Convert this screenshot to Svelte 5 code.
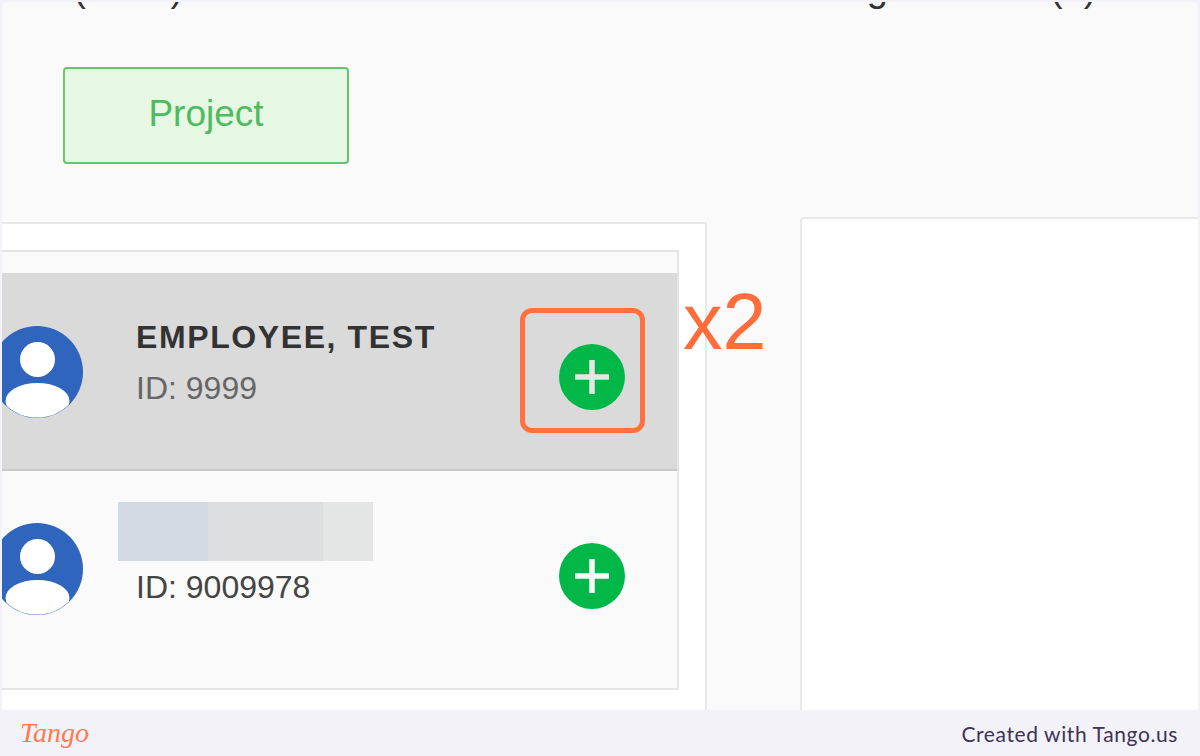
<script>
  const employees = [
    { name: "EMPLOYEE, TEST", id: "9999", selected: true },
    { name: "", id: "9009978", selected: false }
  ];
</script>

<div class="frame">
  <div class="shot">
    <div class="left-col">
      <h2 class="title left-title">AE (2872)</h2>
      <button class="project">Project</button>
      <div class="panel">
        <div class="list">
          {#each employees as emp}
            <div class="row" class:selected={emp.selected}>
              <svg class="avatar" width="94" height="94" viewBox="0 0 94 94">
                <defs>
                  <clipPath id="disc"><circle cx="47" cy="47" r="45.6" /></clipPath>
                </defs>
                <circle cx="47" cy="47" r="46" fill="#2f65bd" />
                <circle cx="47.5" cy="34.5" r="17.5" fill="#fff" />
                <ellipse cx="47.5" cy="76" rx="32" ry="18" fill="#fff" clip-path="url(#disc)" />
              </svg>
              <div class="info">
                {#if emp.selected}
                  <div class="name">{emp.name}</div>
                {:else}
                  <div class="blur">
                    <span class="b1"></span>
                    <span class="b2"></span>
                    <span class="b3"></span>
                  </div>
                {/if}
                <div class="id">ID: {emp.id}</div>
              </div>
              <svg class="add" width="66" height="66" viewBox="0 0 66 66">
                <circle cx="33" cy="33" r="33" fill="#00b748" />
                <path d="M16 33H50M33 16V50" stroke={emp.selected ? "#e6e6e6" : "#fafafa"} stroke-width="5.5" />
              </svg>
            </div>
          {/each}
        </div>
      </div>
    </div>
    <div class="right-col">
      <h2 class="title right-title">Assigned Staff (0)</h2>
      <div class="right-panel"></div>
    </div>

    <div class="highlight"></div>
    <div class="times">x2</div>
  </div>

  <div class="footer">
    <span class="logo">Tango</span>
    <span class="credit">Created with Tango.us</span>
  </div>
</div>

<style>
  :global(body) {
    margin: 0;
    background: #f3f2f8;
  }

  .frame {
    height: 756px;
    padding: 2px 2px 0;
    box-sizing: border-box;
    display: flex;
    flex-direction: column;
    overflow: hidden;
    font-family: "Liberation Sans", Arial, sans-serif;
  }

  .shot {
    position: relative;
    height: 708px;
    flex: none;
    display: grid;
    grid-template-columns: 705px 398px;
    column-gap: 93px;
    background: #fafafa;
    border-radius: 6px 6px 0 0;
    overflow: hidden;
  }

  .left-col,
  .right-col {
    display: flex;
    flex-direction: column;
    min-width: 0;
  }

  .title {
    margin: -33px 0 0;
    height: 38px;
    font-size: 38px;
    line-height: 38px;
    font-weight: 400;
    color: #333;
    white-space: nowrap;
  }

  .left-title {
    padding-left: 10px;
  }

  .right-title {
    margin-left: -5px;
  }

  .project {
    width: 286px;
    height: 97px;
    margin: 60px 0 0 61px;
    padding: 0 0 4px;
    box-sizing: border-box;
    background: #e6f7e4;
    border: 2px solid #6cc273;
    border-radius: 4px;
    font-family: inherit;
    font-size: 37px;
    color: #4fbb5f;
  }

  .panel {
    margin-top: 58px;
    flex: 1;
    background: #fff;
    border-top: 2px solid #e8e8e8;
    border-right: 2px solid #e8e8e8;
    padding-top: 26px;
  }

  .list {
    width: 677px;
    height: 440px;
    box-sizing: border-box;
    background: #fafafa;
    border: 2px solid #e4e4e4;
    border-left: 0;
    padding-top: 21px;
  }

  .row {
    display: flex;
    align-items: flex-start;
    overflow: hidden;
    position: relative;
    height: 216px;
    box-sizing: border-box;
  }

  .row.selected {
    height: 198px;
    background: #dadada;
    border-bottom: 2px solid #c8c8c8;
  }

  .avatar {
    flex: none;
    margin: 51px 0 0 -12px;
  }

  .row.selected .avatar {
    margin-top: 52px;
  }

  .info {
    width: 423px;
    margin-left: 52px;
    flex: none;
    position: relative;
  }

  .name {
    margin-top: 47px;
    font-size: 32px;
    line-height: 34px;
    font-weight: 700;
    color: #333;
    letter-spacing: 1.6px;
    white-space: nowrap;
  }

  .id {
    font-size: 32px;
    line-height: 34px;
    color: #666;
    margin-top: 17px;
  }

  .row:not(.selected) .id {
    color: #444;
    margin-top: 9px;
  }

  .blur {
    display: flex;
    width: 255px;
    height: 59px;
    margin: 31px 0 0 -18px;
  }

  .b1 {
    width: 90px;
    background: #d3dae4;
  }

  .b2 {
    width: 115px;
    background: #dcdee0;
  }

  .b3 {
    width: 50px;
    background: #e4e6e5;
  }

  .add {
    flex: none;
    margin: 71px 0 0 0;
  }

  .row:not(.selected) .add {
    margin-top: 72px;
  }

  .right-panel {
    margin-top: 210px;
    flex: 1;
    background: #fff;
    border: 2px solid #e8e8e8;
    border-right: 0;
    border-bottom: 0;
    border-radius: 4px 0 0 0;
  }

  .highlight {
    position: absolute;
    left: 518px;
    top: 306px;
    width: 125px;
    height: 125px;
    box-sizing: border-box;
    border: 5px solid #ff7043;
    border-radius: 12px;
  }

  .times {
    position: absolute;
    left: 681px;
    top: 277px;
    font-size: 79px;
    line-height: 86px;
    color: #ff6d3a;
  }

  .footer {
    flex: 1;
    display: flex;
    align-items: center;
    justify-content: space-between;
    padding: 0 20px 0 20px;
    margin: 0 -2px;
  }

  .logo {
    font-family: "Liberation Serif", serif;
    font-style: italic;
    font-size: 28px;
    color: #ff7a50;
  }

  .credit {
    font-family: Lato, sans-serif;
    font-size: 21px;
    letter-spacing: 0.6px;
    color: #3e3356;
    margin-right: 2px;
  }
</style>
